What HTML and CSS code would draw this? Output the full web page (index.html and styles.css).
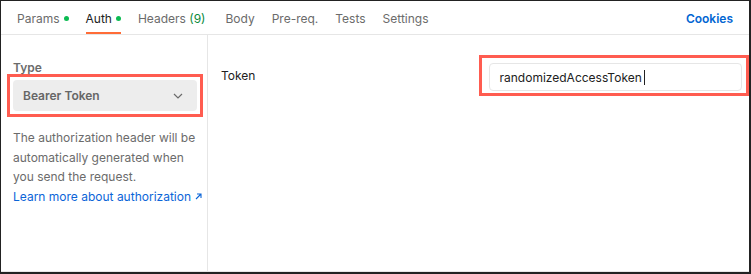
FILE: index.html
```html
<!DOCTYPE html>
<html>
<head>
<meta charset="utf-8">
<link rel="stylesheet" href="styles.css">
</head>
<body>
<div class="frame">
  <div class="tabbar">
    <div class="tabs">
      <div class="tab">Params<span class="dot"></span></div>
      <div class="tab active">Auth<span class="dot"></span></div>
      <div class="tab tab-count">Headers <span class="count">(9)</span></div>
      <div class="tab">Body</div>
      <div class="tab">Pre-req.</div>
      <div class="tab">Tests</div>
      <div class="tab">Settings</div>
    </div>
    <div class="cookies">Cookies</div>
  </div>
  <div class="content">
    <div class="left">
      <div class="label">Type</div>
      <div class="mark-select">
        <div class="select">
          <span>Bearer Token</span>
          <svg class="chev" width="10" height="6" viewBox="0 0 10 6"><path d="M1 1l4 4 4-4" fill="none" stroke="#6b6b6b" stroke-width="1.2"/></svg>
        </div>
      </div>
      <p class="desc">The authorization header will be automatically generated when you send the request.</p>
      <a class="link">Learn more about authorization <svg class="arr" width="7" height="7" viewBox="0 0 7 7"><path d="M1 6L6 1M2 1h4v4" fill="none" stroke="#0b65d8" stroke-width="1.1"/></svg></a>
    </div>
    <div class="right">
      <div class="key">Token</div>
      <div class="mark-input">
        <div class="input"><span class="val">randomizedAccessToken</span><span class="caret"></span></div>
      </div>
    </div>
  </div>
</div>
</body>
</html>
```

FILE: styles.css
```css
* { box-sizing: border-box; }
html, body { margin: 0; padding: 0; background: #fff; }
body { font-family: Inter, "Noto Sans", sans-serif; }

.frame {
  width: 751px;
  height: 274px;
  border-top: 1px solid #222;
  border-left: 1px solid #222;
  border-right: 2px solid #222;
  border-bottom: 2px solid #222;
  display: flex;
  flex-direction: column;
}

.tabbar {
  height: 34px;
  border-bottom: 1px solid #e6e6e6;
  display: flex;
  align-items: stretch;
  justify-content: space-between;
  padding: 0 16px;
}
.tabs { display: flex; gap: 17px; }
.tab {
  display: flex;
  align-items: center;
  font-size: 12px;
  color: #6b6b6b;
  border-bottom: 2px solid transparent;
  padding-top: 3px;
  white-space: pre;
}
.tab-count { padding-right: 3px; }
.tab.active { color: #212121; border-bottom-color: #ff6c37; }
.dot {
  width: 5px; height: 5px; border-radius: 50%;
  background: #0cbb52;
  margin-left: 4px;
}
.count { color: #0a8a3c; }
.cookies {
  display: flex; align-items: center;
  font-size: 12px; font-weight: 600; color: #0265d2;
  padding-top: 2px;
}

.content {
  flex: 1;
  display: flex;
  border-bottom: 1px solid #e6e6e6;
}
.left {
  width: 207px;
  border-right: 1px solid #e6e6e6;
  padding: 25px 11px 0 12px;
}
.label {
  font-size: 12px; font-weight: 600; color: #6b6b6b;
  line-height: 16px;
}
.mark-select {
  margin-top: -2px;
  margin-left: -6px;
  margin-right: -7px;
  border: 3px solid #ff5c50;
  padding: 3px;
}
.select {
  height: 31px;
  background: #ededed;
  border-radius: 4px;
  display: flex; align-items: center; justify-content: space-between;
  padding: 0 14px 0 10px;
  font-size: 12px; font-weight: 600; color: #666;
}
.desc {
  margin: 11px 0 0;
  font-size: 12px; line-height: 19.5px; color: #6b6b6b;
}
.link {
  display: block;
  white-space: nowrap;
  font-size: 12px; line-height: 19.5px; color: #0b65d8;
}
.arr { margin-left: 1px; vertical-align: 1px; }

.right {
  flex: 1;
  display: grid;
  grid-template-columns: 1fr 1fr;
  align-items: start;
  padding-top: 20px;
}
.key {
  padding: 0 0 0 13px;
  margin-top: 13px;
  font-size: 12px; color: #212121; line-height: 16px;
}
.mark-input {
  border: 3px solid #ff5c50;
  padding: 5px 4px 2px 7px;
}
.input {
  height: 28px;
  border: 1px solid #e6e6e6;
  border-radius: 4px;
  display: flex; align-items: center;
  padding-left: 10px;
  font-size: 12px; color: #212121;
}
.caret {
  width: 1px; height: 15px; background: #212121; margin-left: 2px;
}
```
